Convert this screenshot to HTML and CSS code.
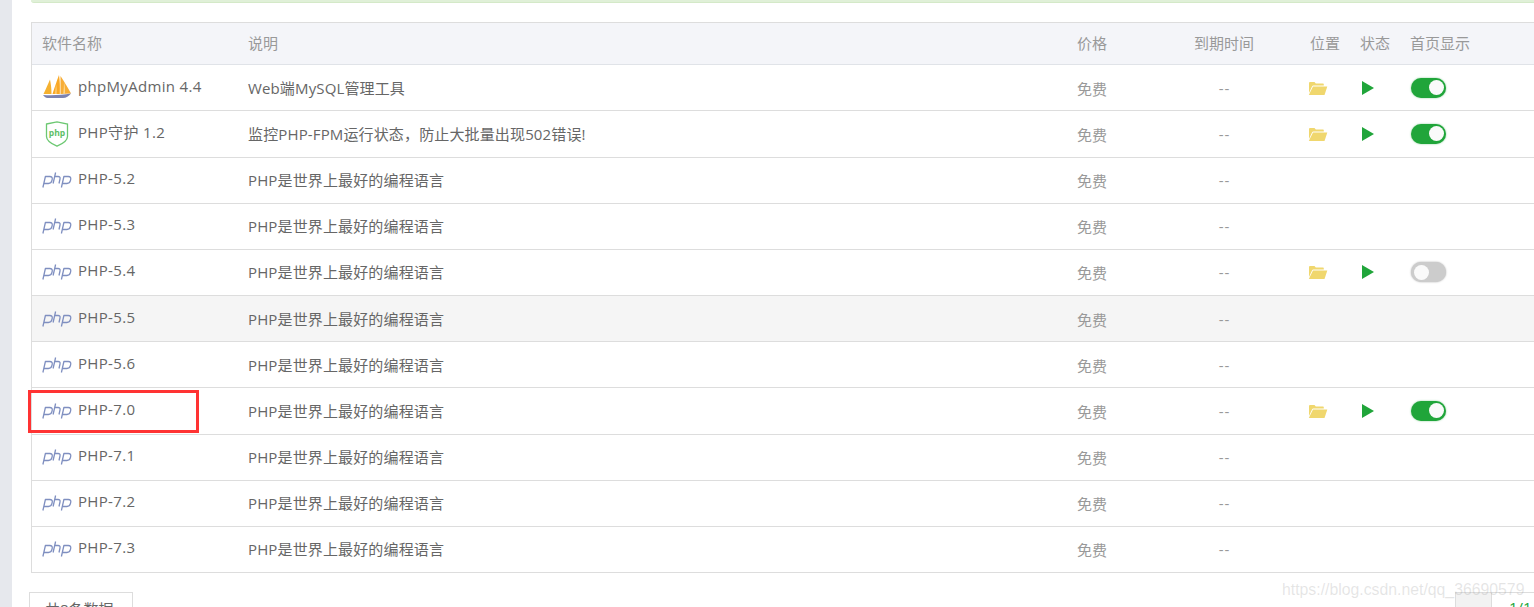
FILE: index.html
```html
<!DOCTYPE html>
<html lang="zh">
<head>
<meta charset="utf-8">
<title>软件管理</title>
<link rel="stylesheet" href="styles.css">
</head>
<body>
<svg class="defs" width="0" height="0" aria-hidden="true">
  <defs>
    <symbol id="php" viewBox="0 0 30 16">
      <g fill="none" stroke="#7f8fc0" stroke-width="1.3" stroke-linejoin="round">
        <path d="M.9 15.500 3.400 4.500H7.800c1.900 0 2.800 1 2.400 2.800l-.3 1.400c-.4 1.800-1.700 2.800-3.500 2.800H2"/>
        <path d="M13.600.500 11.100 11.500M12.200 4.500H16c1.700 0 2.400.9 2 2.500l-1 4.500"/>
        <path d="M19.400 15.500 21.900 4.500H26.300c1.900 0 2.800 1 2.400 2.800l-.3 1.400c-.4 1.800-1.700 2.800-3.500 2.800H20.500"/>
      </g>
    </symbol>
    <symbol id="folder" viewBox="0 0 20 14">
      <path fill="#f0d76e" d="M1 12V2.200C1 1.500 1.500 1 2.200 1h4.300l1.300 1.500h7c.6 0 1 .4 1 1V4.500H5.500C4.800 4.500 4.300 4.800 4 5.500Z"/>
      <path fill="#f0d76e" d="M5 5.500h14.300L16.500 14H0.800Z"/>
    </symbol>
    <symbol id="play" viewBox="0 0 12 14" preserveAspectRatio="none">
      <path fill="#20a53a" d="M0 0 12 7 0 14Z"/>
    </symbol>
  </defs>
</svg>
<div class="rail"></div>
<main class="content">
  <div class="notice"></div>
  <div class="table">
    <div class="row head">
      <div>软件名称</div><div>说明</div><div>价格</div><div class="center">到期时间</div><div>位置</div><div>状态</div><div>首页显示</div>
    </div>
    <div class="row">
      <div class="name">
        <svg class="soft-icon" viewBox="0 0 30 26"><path fill="#f5b130" d="M1.500 20C4 15 6 10 8 5.500c1 5 1.500 9.500 1.500 14.500Z"/><path fill="#f9a825" d="M10.500 20c1.500-5 3-9 4-12 1-3 2-5.500 2.500-7 1 6 1 13 .8 19Z"/><path fill="#fbc76a" d="M14 10c.8 3 1 6 .8 10h-2c.4-3 .8-7 1.200-10Z"/><path fill="#f7ad36" d="M18.500 2c4 6 7.500 12 10.500 17.500l-10.500.5Z"/><path fill="#fcd58c" d="M22 8c1 4 1.200 8 1 11.700h-1.800c.6-4 .8-8 .8-11.700Z"/><path fill="#7c83b0" d="M1 21c9 .5 19 .2 28-1.500-2 2.500-5 4.500-8 4.500H5.500C3.500 24 2 22.500 1 21Z"/></svg>
        <span>phpMyAdmin 4.4</span>
      </div>
      <div class="desc">Web端MySQL管理工具</div><div class="price">免费</div><div class="dash">--</div>
      <div class="cell-icon"><svg class="folder"><use href="#folder"/></svg></div>
      <div class="cell-icon"><svg class="play"><use href="#play"/></svg></div>
      <div class="cell-icon"><span class="switch on"></span></div>
    </div>
    <div class="row">
      <div class="name">
        <svg class="soft-icon shield" viewBox="0 0 30 26"><path fill="#fff" stroke="#6cc872" stroke-width="1.300" d="M4.500 3 15 .8 25.500 3v12.500C25.500 20 19 23.500 15 25.200 11 23.500 4.500 20 4.500 15.500Z"/><text x="15" y="14.800" class="shield-text">php</text></svg>
        <span>PHP守护 1.2</span>
      </div>
      <div class="desc">监控PHP-FPM运行状态，防止大批量出现502错误!</div><div class="price">免费</div><div class="dash">--</div>
      <div class="cell-icon"><svg class="folder"><use href="#folder"/></svg></div>
      <div class="cell-icon"><svg class="play"><use href="#play"/></svg></div>
      <div class="cell-icon"><span class="switch on"></span></div>
    </div>
    <div class="row">
      <div class="name"><svg class="php-icon"><use href="#php"/></svg><span>PHP-5.2</span></div>
      <div class="desc">PHP是世界上最好的编程语言</div><div class="price">免费</div><div class="dash">--</div>
    </div>
    <div class="row">
      <div class="name"><svg class="php-icon"><use href="#php"/></svg><span>PHP-5.3</span></div>
      <div class="desc">PHP是世界上最好的编程语言</div><div class="price">免费</div><div class="dash">--</div>
    </div>
    <div class="row">
      <div class="name"><svg class="php-icon"><use href="#php"/></svg><span>PHP-5.4</span></div>
      <div class="desc">PHP是世界上最好的编程语言</div><div class="price">免费</div><div class="dash">--</div>
      <div class="cell-icon"><svg class="folder"><use href="#folder"/></svg></div>
      <div class="cell-icon"><svg class="play"><use href="#play"/></svg></div>
      <div class="cell-icon"><span class="switch"></span></div>
    </div>
    <div class="row hover">
      <div class="name"><svg class="php-icon"><use href="#php"/></svg><span>PHP-5.5</span></div>
      <div class="desc">PHP是世界上最好的编程语言</div><div class="price">免费</div><div class="dash">--</div>
    </div>
    <div class="row">
      <div class="name"><svg class="php-icon"><use href="#php"/></svg><span>PHP-5.6</span></div>
      <div class="desc">PHP是世界上最好的编程语言</div><div class="price">免费</div><div class="dash">--</div>
    </div>
    <div class="row">
      <div class="name"><svg class="php-icon"><use href="#php"/></svg><span>PHP-7.0</span></div>
      <div class="desc">PHP是世界上最好的编程语言</div><div class="price">免费</div><div class="dash">--</div>
      <div class="cell-icon"><svg class="folder"><use href="#folder"/></svg></div>
      <div class="cell-icon"><svg class="play"><use href="#play"/></svg></div>
      <div class="cell-icon"><span class="switch on"></span></div>
      <div class="highlight"></div>
    </div>
    <div class="row">
      <div class="name"><svg class="php-icon"><use href="#php"/></svg><span>PHP-7.1</span></div>
      <div class="desc">PHP是世界上最好的编程语言</div><div class="price">免费</div><div class="dash">--</div>
    </div>
    <div class="row">
      <div class="name"><svg class="php-icon"><use href="#php"/></svg><span>PHP-7.2</span></div>
      <div class="desc">PHP是世界上最好的编程语言</div><div class="price">免费</div><div class="dash">--</div>
    </div>
    <div class="row">
      <div class="name"><svg class="php-icon"><use href="#php"/></svg><span>PHP-7.3</span></div>
      <div class="desc">PHP是世界上最好的编程语言</div><div class="price">免费</div><div class="dash">--</div>
    </div>
  </div>
  <div class="footer">
    <div class="total">共8条数据</div>
    <div class="pager"><span class="prev">‹</span><span class="pages">1/1</span></div>
  </div>
</main>
<div class="watermark">https://blog.csdn.net/qq_36690579</div>
</body>
</html>
```
FILE: styles.css
```css
* { box-sizing: border-box; }
html, body { margin: 0; height: 607px; overflow: hidden; background: #fff; }
body {
  display: flex;
  position: relative;
  font-family: "Open Sans", "Noto Sans CJK SC", sans-serif;
  font-size: 15px;
  color: #666;
}
.defs { position: absolute; }
.rail { flex: 0 0 12px; background: #e6e8ed; }
.content { flex: 0 0 1522px; padding-left: 19px; min-width: 0; }
.notice {
  height: 3px;
  background: #e0f0d8;
  border-bottom: 1px solid #d4e9c8;
  border-bottom-left-radius: 3px;
}
.table {
  margin-top: 19px;
  width: 1540px;
  border: 1px solid #ddd;
}
.row {
  display: grid;
  grid-template-columns: 206px 829px 61px 172px 50px 50px 1fr;
  align-items: center;
  position: relative;
  height: 46.167px;
  padding-left: 10px;
  border-bottom: 1px solid #ddd;
}
.row:last-child { height: 45.167px; border-bottom: 0; }
.head {
  height: 42.250px;
  padding-bottom: 2px;
  background: #f4f5f9;
  color: #999;
  border-bottom-color: #e0e3e8;
}
.center, .dash { text-align: center; }
.dash { color: #999; letter-spacing: 1px; padding-left: 1px; }
.price { color: #999; margin-top: 1px; }
.desc { letter-spacing: .14px; margin-bottom: 1px; }
.hover { background: #f5f5f5; }
.name { display: flex; align-items: center; gap: 6px; letter-spacing: .33px; }
.name span { margin-bottom: 4px; }
.soft-icon { width: 30px; height: 26px; flex: none; margin-bottom: 1px; }
.soft-icon.shield { margin-bottom: -1px; }
.php-icon { width: 30px; height: 16px; flex: none; }
.shield-text { font: 700 8.5px "Open Sans", sans-serif; fill: #5cc066; text-anchor: middle; letter-spacing: 0; }
.cell-icon { display: flex; align-items: center; }
.folder { width: 20px; height: 14px; margin-left: -2px; }
.play { width: 12px; height: 14px; margin-left: 2px; }
.switch {
  position: relative;
  display: block;
  width: 35px;
  height: 20px;
  margin-left: 1px;
  border-radius: 10px;
  background: #ccc;
  box-shadow: 0 0 2px #aaa;
}
.switch::after {
  content: "";
  position: absolute;
  left: 2.500px;
  top: 2.500px;
  width: 15px;
  height: 15px;
  border-radius: 50%;
  background: #fafafa;
}
.switch.on { background: #20a53a; box-shadow: 0 0 2px #7fc98d; }
.switch.on::after { left: 17.500px; }
.highlight {
  position: absolute;
  left: -4px;
  top: 2px;
  width: 171px;
  height: 43px;
  border: 3px solid #f33;
}
.footer {
  display: flex;
  justify-content: space-between;
  margin-top: 19px;
  margin-left: -2px;
}
.total {
  width: 104px;
  height: 40px;
  border: 1px solid #ddd;
  padding: 5px 0 0 15px;
  white-space: nowrap;
}
.pager { display: flex; margin-right: -18px; height: 40px; }
.prev {
  width: 37px;
  padding-top: 5px;
  background: #f2f2f2;
  border: 1px solid #ddd;
  text-align: center;
}
.pages {
  width: 60px;
  padding: 4px 0 0 17px;
  border-top: 1px solid #ddd;
  color: #20a53a;
}
.watermark {
  position: absolute;
  left: 1282px;
  top: 581px;
  font: 15.800px "Liberation Sans", sans-serif;
  color: rgba(150, 150, 150, 0.25);
  white-space: nowrap;
}
```
